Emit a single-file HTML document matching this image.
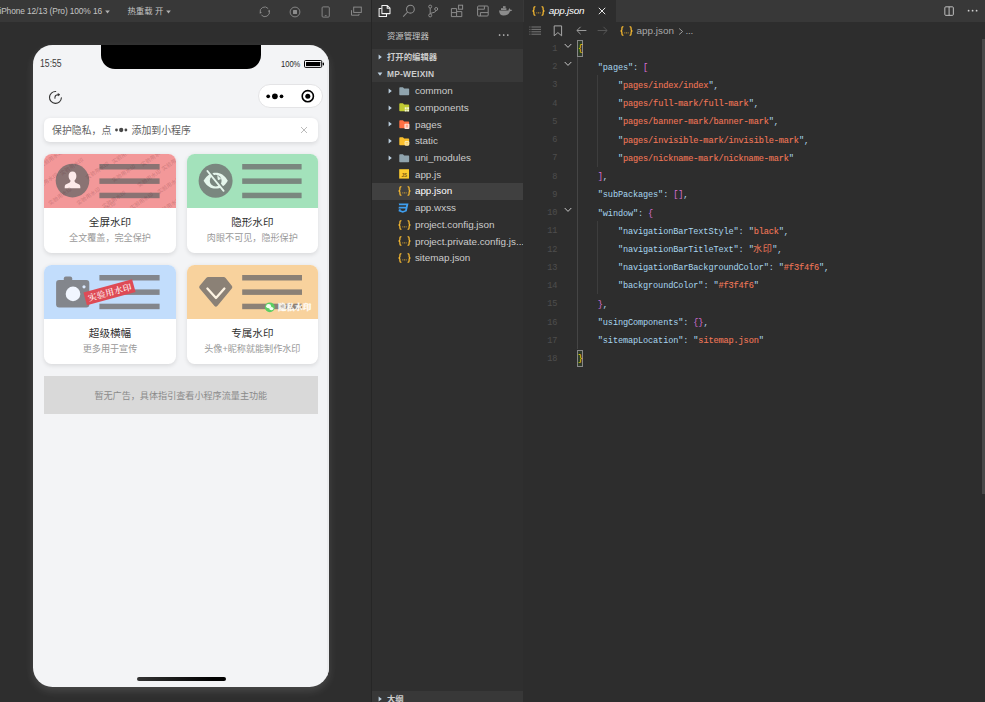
<!DOCTYPE html>
<html lang="zh-CN">
<head>
<meta charset="utf-8">
<title>app.json</title>
<style>
*{box-sizing:border-box;margin:0;padding:0}
html,body{width:985px;height:702px;overflow:hidden;background:#2e2e2e}
body{position:relative;font-family:"Liberation Sans","Noto Sans CJK SC",sans-serif;color:#ccc;-webkit-font-smoothing:antialiased}
.abs{position:absolute}
.t{position:absolute;white-space:nowrap;line-height:1}
/* simulator */
#sim{position:absolute;left:0;top:0;width:371px;height:702px;background:#2e2e2e;overflow:hidden}
#simbar{position:absolute;left:0;top:0;width:371px;height:22.4px;background:#383838}
#simbar .t{font-size:8.4px;color:#c4c4c4;top:7px}
#sep{position:absolute;left:371px;top:0;width:1px;height:702px;background:#262626}
/* phone */
#phone{position:absolute;left:32.5px;top:45px;width:296.6px;height:641.8px;border-radius:19.5px;background:#f3f4f6;overflow:hidden;box-shadow:0 4px 8px rgba(255,255,255,.13)}
#pwrap{position:absolute;left:0;top:0;width:371px;height:702px}
#notch{position:absolute;left:100.7px;top:45px;width:160.3px;height:24.2px;background:#000;border-radius:0 0 14px 14px}
.card{position:absolute;width:131.3px;height:99px;border-radius:7.6px;background:#fff;overflow:hidden;box-shadow:0 1.5px 4px rgba(0,0,0,.10)}
.card .img{position:absolute;left:0;top:0;width:100%;height:54.2px;overflow:hidden}
.card .ttl{position:absolute;left:0;width:100%;text-align:center;top:62.6px;font-size:10.6px;line-height:1;color:#303030;white-space:nowrap}
.card .sub{position:absolute;left:0;width:100%;text-align:center;top:80px;font-size:9.1px;line-height:1;color:#999;white-space:nowrap}
.bar{position:absolute;left:55.4px;width:60.2px;height:5.6px}
/* sidebar */
#side{position:absolute;left:372px;top:0;width:151.5px;height:702px;background:#2f2f2f;overflow:hidden}
.row{position:absolute;left:0;width:151px;height:16.72px}
.row .lbl{position:absolute;left:42.9px;top:2.45px;font-size:9.9px;line-height:1.15;color:#ccc;white-space:nowrap}
.hdr{position:absolute;left:0;width:151px;height:16.7px;background:#383838}
.hdr .lbl{position:absolute;left:15px;top:4px;font-size:8.4px;line-height:1.15;font-weight:bold;color:#ccc;white-space:nowrap}
/* editor */
#ed{position:absolute;left:523px;top:0;width:462px;height:702px;background:#2d2d2d;overflow:hidden}
#tabs{position:absolute;left:0;top:0;width:462px;height:22px;background:#383838}
#tab{position:absolute;left:0.5px;top:0;width:92px;height:22px;background:#2d2d2d}
.ln{position:absolute;left:0;width:462px;height:18.24px;font-family:"Liberation Mono","Noto Sans CJK SC",monospace;font-size:8.6px;line-height:18.24px;white-space:pre;letter-spacing:-0.13px}
.ln .no{position:absolute;left:0;top:1px;width:34.5px;text-align:right;color:#4d4d4d;letter-spacing:0}
.ln .cd{position:absolute;left:54.7px;top:1.4px}
.k{color:#a8d6ef}.s{color:#ee7758;-webkit-text-stroke:0.1px #ee7758}.p{color:#aed3e9}.b1{color:#ffd700}.b2{color:#da70d6}
</style>
</head>
<body>
<div id="sim">
  <div id="simbar">
    <div class="t" style="left:-0.6px;letter-spacing:-0.12px">iPhone 12/13 (Pro) 100% 16</div>
    <svg class="abs" style="left:104.6px;top:9.6px" width="5" height="4" viewBox="0 0 5 4"><path d="M0.2 0.4 L4.8 0.4 L2.5 3.4 Z" fill="#b0b0b0"/></svg>
    <svg class="abs" style="left:165.8px;top:9.6px" width="5" height="4" viewBox="0 0 5 4"><path d="M0.2 0.4 L4.8 0.4 L2.5 3.4 Z" fill="#b0b0b0"/></svg>
    <div class="t" style="left:127.5px">热重载 开</div>

    <svg class="abs" style="left:259px;top:6px" width="12" height="12" viewBox="0 0 12 12"><path d="M1.2 6.6 A4.6 4.6 0 0 1 9.2 2.6 M10.4 5 A4.6 4.6 0 0 1 2.4 9" fill="none" stroke="#8c8c8c" stroke-width="0.9"/><path d="M10.9 3.8 L10.6 6.2 L8.7 4.9 Z M0.7 7.8 L1 5.4 L2.9 6.7 Z" fill="#8c8c8c"/></svg>
    <svg class="abs" style="left:289.3px;top:5.6px" width="12" height="12" viewBox="0 0 12 12"><circle cx="6" cy="6" r="4.9" fill="none" stroke="#8c8c8c" stroke-width="0.9"/><rect x="4" y="4" width="4" height="4" rx="0.5" fill="#8c8c8c"/></svg>
    <svg class="abs" style="left:321px;top:5.6px" width="10" height="12" viewBox="0 0 10 12"><rect x="1.1" y="0.9" width="7.2" height="10.2" rx="1" fill="none" stroke="#8c8c8c" stroke-width="0.9"/><path d="M3.8 9.6 L5.6 9.6" stroke="#8c8c8c" stroke-width="0.8"/></svg>
    <svg class="abs" style="left:349.6px;top:6.4px" width="13" height="11" viewBox="0 0 13 11"><rect x="3.7" y="1.1" width="7.6" height="5.3" fill="none" stroke="#8c8c8c" stroke-width="0.95"/><path d="M1.5 4.2 L1.5 9.2 L9 9.2 L9 7.8" fill="none" stroke="#8c8c8c" stroke-width="0.95"/></svg>
  </div>
  <div id="pwrap">

    <div id="phone"><div class="abs" style="right:0;top:0;width:2px;height:642px;background:#ebecee"></div></div>
    <div id="notch"></div>
    <!-- status bar -->
    <div class="t" style="left:40.4px;top:59.3px;font-size:10.2px;color:#3c3c3c;transform:scaleX(.85);transform-origin:0 0">15:55</div>
    <div class="t" style="left:280.6px;top:59.6px;font-size:9.2px;color:#262626;transform:scaleX(.82);transform-origin:0 0">100%</div>
    <svg class="abs" style="left:304px;top:60px" width="22" height="9" viewBox="0 0 22 9">
      <rect x="0.5" y="0.5" width="17.2" height="6.9" rx="1" fill="none" stroke="#000" stroke-width="1"/>
      <rect x="2" y="2" width="14.2" height="3.9" rx="0.2" fill="#000"/>
      <rect x="18.7" y="2.6" width="1.3" height="2.8" rx="0.6" fill="#000"/>
    </svg>
    <!-- nav bar -->
    <svg class="abs" style="left:44px;top:86px" width="24" height="24" viewBox="0 0 24 24">
      <path d="M11.7 5.5 A5.95 5.95 0 1 0 17.4 11.7" fill="none" stroke="#333" stroke-width="1.1" stroke-linecap="round"/>
      <path d="M10.95 12.3 L10.95 11.2 Q10.95 8.9 14.3 8.7" fill="none" stroke="#333" stroke-width="1.05" stroke-linecap="round"/>
      <path d="M13.9 7.5 L16 8.6 L14.2 9.9 Z" fill="#333" stroke="#333" stroke-width="0.5" stroke-linejoin="round"/>
    </svg>
    <div class="abs" style="left:258.2px;top:84.2px;width:65.3px;height:23.6px;border-radius:12px;background:#fff;border:0.8px solid #e4e4e6"></div>
    <svg class="abs" style="left:257.6px;top:84.2px" width="66" height="24" viewBox="0 0 66 24">
      <circle cx="10.2" cy="12.3" r="1.85" fill="#000"/>
      <circle cx="16.9" cy="12.3" r="2.85" fill="#000"/>
      <circle cx="23.5" cy="12.3" r="1.85" fill="#000"/>
      <circle cx="49.8" cy="12.2" r="5.6" fill="none" stroke="#000" stroke-width="1.6"/>
      <circle cx="49.8" cy="12.2" r="2.5" fill="#000"/>
    </svg>
    <!-- tip -->
    <div class="abs" style="left:43.9px;top:117.5px;width:274.1px;height:24.6px;border-radius:6px;background:#fff;box-shadow:0 1.5px 4px rgba(0,0,0,.10)"></div>
    <div class="t" style="left:52px;top:126.2px;font-size:9.9px;color:#626262">保护隐私，点 <svg width="12.4" height="6" viewBox="0 0 12.4 6" style="vertical-align:1.3px;margin:0 1.1px 0 1.3px"><circle cx="1.5" cy="3" r="1.4" fill="#484848"/><circle cx="6.2" cy="3" r="2.15" fill="#484848"/><circle cx="10.9" cy="3" r="1.4" fill="#484848"/></svg> 添加到小程序</div>
    <svg class="abs" style="left:299.5px;top:126px" width="8" height="8" viewBox="0 0 8 8"><path d="M1 1 L7 7 M7 1 L1 7" stroke="#aaa" stroke-width="0.8" fill="none"/></svg>
    <!-- card 1 -->
    <div class="card" style="left:43.9px;top:154px;width:132.2px">
      <div class="img" style="background:#f39899">
        <svg class="abs" style="left:0;top:0" width="132" height="55" viewBox="0 0 132 55">
          <circle cx="28.5" cy="26.6" r="16.8" fill="#8a7373"/>
          <rect x="55.4" y="10" width="60.2" height="5.5" fill="#8a7373"/>
          <rect x="55.4" y="24.4" width="60.2" height="5.5" fill="#8a7373"/>
          <rect x="55.4" y="38.7" width="60.2" height="5.5" fill="#8a7373"/>
          <path d="M28.5 17.6 c2.6 0 3.9 2.1 3.9 4.4 c0 2 -0.9 3.6 -1.9 4.4 c0 1.6 0.6 2.1 2.2 2.8 c2.2 0.9 3.6 1.5 3.6 3.5 l0 1.6 l-15.6 0 l0 -1.6 c0 -2 1.4 -2.6 3.6 -3.5 c1.6 -0.7 2.2 -1.2 2.2 -2.8 c-1 -0.8 -1.9 -2.4 -1.9 -4.4 c0 -2.3 1.3 -4.4 3.9 -4.4z" fill="#fdeaea"/>
          <g font-size="5.4" fill="#4a0f18" fill-opacity="0.27" font-family="Liberation Sans, Noto Sans CJK SC, sans-serif"><text transform="translate(7.1 4.9) rotate(-34)" text-anchor="middle" y="2">实验用水印</text><text transform="translate(27.8 12.5) rotate(-34)" text-anchor="middle" y="2">实验用水印</text><text transform="translate(53.3 16.6) rotate(-34)" text-anchor="middle" y="2">实验用水印</text><text transform="translate(79.6 19.4) rotate(-34)" text-anchor="middle" y="2">实验用水印</text><text transform="translate(105.1 24.2) rotate(-34)" text-anchor="middle" y="2">实验用水印</text><text transform="translate(125.1 31.1) rotate(-34)" text-anchor="middle" y="2">实验用水印</text><text transform="translate(2.2 27.7) rotate(-34)" text-anchor="middle" y="2">实验用水印</text><text transform="translate(16 42.2) rotate(-34)" text-anchor="middle" y="2">实验用水印</text><text transform="translate(44.4 42.2) rotate(-34)" text-anchor="middle" y="2">实验用水印</text><text transform="translate(69.9 45.6) rotate(-34)" text-anchor="middle" y="2">实验用水印</text><text transform="translate(97.5 47) rotate(-34)" text-anchor="middle" y="2">实验用水印</text><text transform="translate(125.1 51.8) rotate(-34)" text-anchor="middle" y="2">实验用水印</text><text transform="translate(79.6 0.8) rotate(-34)" text-anchor="middle" y="2">实验用水印</text><text transform="translate(108.6 3.5) rotate(-34)" text-anchor="middle" y="2">实验用水印</text><text transform="translate(129.3 7.7) rotate(-34)" text-anchor="middle" y="2">实验用水印</text><text transform="translate(60 56) rotate(-34)" text-anchor="middle" y="2">实验用水印</text></g>
        </svg>
      </div>
      <div class="ttl">全屏水印</div>
      <div class="sub">全文覆盖，完全保护</div>
    </div>
    <!-- card 2 -->
    <div class="card" style="left:186.7px;top:154px">
      <div class="img" style="background:#a3e2bb">
        <svg class="abs" style="left:0;top:0" width="132" height="55" viewBox="0 0 132 55">
          <circle cx="28.6" cy="26.7" r="17" fill="#7a877f"/>
          <rect x="55.2" y="10" width="59.4" height="5.5" fill="#7a877f"/>
          <rect x="55.2" y="24.4" width="59.4" height="5.5" fill="#7a877f"/>
          <rect x="55.2" y="38.7" width="59.4" height="5.5" fill="#7a877f"/>
          <path d="M16.6 26.7 C20 21 24 18.8 28.7 18.8 C33.4 18.8 37.4 21 40.8 26.7 C37.4 32.4 33.4 34.6 28.7 34.6 C24 34.6 20 32.4 16.6 26.7 Z" fill="#e6f6ec"/>
          <circle cx="28.7" cy="26.7" r="5.9" fill="#7a877f"/>
          <path d="M30.2 21 L34.2 25 L30.8 26.2 Z" fill="#e6f6ec"/>
          <path d="M21.6 16.2 L37.8 36" stroke="#7a877f" stroke-width="2" fill="none"/>
          <path d="M20.4 17 L36.6 36.8" stroke="#e6f6ec" stroke-width="1.9" fill="none" stroke-linecap="round"/>
        </svg>
      </div>
      <div class="ttl">隐形水印</div>
      <div class="sub">肉眼不可见，隐形保护</div>
    </div>
    <!-- card 3 -->
    <div class="card" style="left:43.9px;top:265.2px;width:132.2px">
      <div class="img" style="background:#c2ddfc">
        <svg class="abs" style="left:0;top:0" width="132" height="55" viewBox="0 0 132 55">
          <rect x="55.4" y="10" width="60.2" height="5.5" fill="#83868c"/>
          <rect x="55.4" y="24.4" width="60.2" height="5.5" fill="#83868c"/>
          <rect x="55.4" y="38.7" width="60.2" height="5.5" fill="#83868c"/>
          <rect x="12.1" y="15" width="33.2" height="27.4" rx="3" fill="#83868c"/>
          <rect x="19.8" y="11.6" width="8.4" height="6" rx="2" fill="#83868c"/>
          <circle cx="29" cy="28.9" r="7.3" fill="#f1f6ff"/>
          <circle cx="40" cy="21.8" r="1.6" fill="#dcebff"/>
          <g transform="translate(65.6 27.6) rotate(-15.2)">
            <rect x="-25.2" y="-7" width="50.4" height="13.3" fill="#de4b56"/>
            <text x="0.3" y="3" text-anchor="middle" font-size="8.7" letter-spacing="0.3" font-weight="600" fill="#fde9ea" font-family="Liberation Serif, Noto Serif CJK SC, serif">实验用水印</text>
          </g>
        </svg>
      </div>
      <div class="ttl">超级横幅</div>
      <div class="sub">更多用于宣传</div>
    </div>
    <!-- card 4 -->
    <div class="card" style="left:186.7px;top:265.2px">
      <div class="img" style="background:#f8d29d">
        <svg class="abs" style="left:0;top:0" width="132" height="55" viewBox="0 0 132 55">
          <rect x="55.2" y="10" width="59.8" height="5.5" fill="#8b8176"/>
          <rect x="55.2" y="24.4" width="59.8" height="5.5" fill="#8b8176"/>
          <rect x="55.2" y="38.7" width="59.8" height="5.5" fill="#8b8176"/>
          <path d="M21.2 12 L36.6 12 Q37.8 12 38.6 12.9 L45 21 Q45.8 22.2 44.8 23.4 L30.3 41 Q28.9 42.4 27.5 41 L12.7 23.4 Q11.7 22.2 12.5 21 L19.2 12.9 Q20 12 21.2 12 Z" fill="#8b8176"/>
          <path d="M20.4 23.5 L29 33 L37.4 23.5" stroke="#fdf3e2" stroke-width="2.3" fill="none" stroke-linecap="round" stroke-linejoin="round"/>
          <circle cx="82.8" cy="42.3" r="4.9" fill="#5ccf63"/>
          <ellipse cx="81.6" cy="41.2" rx="2.5" ry="2.1" fill="#f2fff2"/>
          <ellipse cx="84.4" cy="43.6" rx="2.1" ry="1.7" fill="#f2fff2"/>
          <text x="91" y="45.4" font-size="8.3" font-weight="900" fill="#fffaf0" stroke="#fff" stroke-opacity="0.55" stroke-width="0.45" font-family="Liberation Serif, Noto Serif CJK SC, serif">隐私水印</text>
        </svg>
      </div>
      <div class="ttl">专属水印</div>
      <div class="sub">头像+昵称就能制作水印</div>
    </div>
    <!-- ad -->
    <div class="abs" style="left:43.7px;top:375.8px;width:274.2px;height:37.8px;background:#d9d9d9"></div>
    <div class="t" style="left:43.7px;width:274.2px;text-align:center;top:391.7px;font-size:9.1px;color:#8a8a8a">暂无广告，具体指引查看小程序流量主功能</div>
    <!-- home indicator -->
    <div class="abs" style="left:137px;top:676.7px;width:88.6px;height:4px;border-radius:2px;background:linear-gradient(90deg,#333 0%,#151515 50%,#000 85%)"></div>
  </div>
</div>
<div id="sep"></div>
<div id="side">
<div class="abs" style="left:0;top:0;width:151px;height:22px;background:#333"></div>
<svg class="abs" style="left:5.5px;top:4px" width="14" height="14" viewBox="0 0 14 14"><path d="M3.9 1.5 L9.4 1.5 L12 4.1 L12 9.6 L3.9 9.6 Z M9.2 1.5 L9.2 4.3 L12 4.3" fill="none" stroke="#f0f0f0" stroke-width="1.05" stroke-linejoin="round"/><path d="M3.7 4.4 L1.1 4.4 L1.1 12.4 L8.5 12.4 L8.5 9.8" fill="none" stroke="#f0f0f0" stroke-width="1.05" stroke-linejoin="round"/></svg>
<svg class="abs" style="left:30px;top:4px" width="14" height="14" viewBox="0 0 14 14"><circle cx="8.4" cy="5.2" r="3.9" fill="none" stroke="#8c8c8c" stroke-width="1.05"/><path d="M5.6 8 L1.2 12.6" stroke="#8c8c8c" stroke-width="1.05" fill="none"/></svg>
<svg class="abs" style="left:54px;top:4px" width="14" height="14" viewBox="0 0 14 14"><circle cx="4.2" cy="2.6" r="1.5" fill="none" stroke="#8c8c8c" stroke-width="1"/><circle cx="4.2" cy="11.4" r="1.5" fill="none" stroke="#8c8c8c" stroke-width="1"/><circle cx="10.2" cy="5" r="1.5" fill="none" stroke="#8c8c8c" stroke-width="1"/><path d="M4.2 4.1 L4.2 9.9 M10.2 6.5 Q10.2 8.4 4.4 9.4" fill="none" stroke="#8c8c8c" stroke-width="1"/></svg>
<svg class="abs" style="left:78px;top:4px" width="14" height="14" viewBox="0 0 14 14"><path d="M1.4 4.6 L6.6 4.6 L6.6 12.6 L1.4 12.6 Z M6.6 7.6 L11.8 7.6 L11.8 12.6 L6.6 12.6 M1.4 8.6 L6.6 8.6" fill="none" stroke="#8c8c8c" stroke-width="1"/><rect x="8.6" y="1.2" width="4" height="4" fill="none" stroke="#8c8c8c" stroke-width="1"/></svg>
<svg class="abs" style="left:103.5px;top:4px" width="14" height="14" viewBox="0 0 14 14"><rect x="1.6" y="2" width="10.6" height="10" rx="1" fill="none" stroke="#8c8c8c" stroke-width="1"/><path d="M1.6 5.2 L8.4 5.2 L8.4 2.2 M4.4 12 L4.4 8.6 L12 8.6" fill="none" stroke="#8c8c8c" stroke-width="1"/></svg>
<svg class="abs" style="left:126px;top:4px" width="15" height="14" viewBox="0 0 15 14"><path d="M1 6.4 L10.4 6.4 Q10.6 4.6 11.8 4.2 Q12.4 5.2 12.2 5.8 Q13.4 5.4 14.2 6 Q13.6 7.2 12 7.2 Q10.6 11.6 5.6 11.6 Q1.6 11.6 1 6.4 Z" fill="#8c8c8c"/><rect x="3" y="4.2" width="5.4" height="1.8" fill="#8c8c8c"/><rect x="5" y="2.2" width="2.6" height="1.7" fill="#8c8c8c"/></svg>
<div class="t" style="left:14.9px;top:31.9px;font-size:8.4px;color:#c8c8c8">资源管理器</div>
<svg class="abs" style="left:126px;top:33.4px" width="12" height="4" viewBox="0 0 12 4"><circle cx="1.6" cy="2" r="0.85" fill="#c8c8c8"/><circle cx="5.7" cy="2" r="0.85" fill="#c8c8c8"/><circle cx="9.8" cy="2" r="0.85" fill="#c8c8c8"/></svg>
<div class="hdr" style="top:48.7px"><div class="lbl">打开的编辑器</div><svg class="abs" style="left:4.6px;top:5.4px" width="6" height="6" viewBox="0 0 6 6"><path d="M1.6 0.6 L4.8 3 L1.6 5.4 Z" fill="#bcd0e0"/></svg></div>
<div class="hdr" style="top:65.4px"><div class="lbl" style="font-family:'Liberation Sans',sans-serif;letter-spacing:0.25px;top:4.2px">MP-WEIXIN</div><svg class="abs" style="left:4.6px;top:5.6px" width="6" height="6" viewBox="0 0 6 6"><path d="M0.6 1.6 L5.4 1.6 L3 4.8 Z" fill="#bcd0e0"/></svg></div>
<div class="row" style="top:82.64px"><svg class="abs" style="left:14.7px;top:5.4px" width="6" height="6" viewBox="0 0 6 6"><path d="M1.6 0.6 L4.8 3 L1.6 5.4 Z" fill="#bcd0e0"/></svg><svg class="abs" style="left:27.1px;top:4.1px" width="11.2" height="9.3" viewBox="0 0 12 10"><path d="M0.3 1.2 Q0.3 0.4 1.1 0.4 L4.2 0.4 L5.5 1.7 L10.1 1.7 Q10.9 1.7 10.9 2.5 L10.9 8.2 Q10.9 9 10.1 9 L1.1 9 Q0.3 9 0.3 8.2 Z" fill="#90a4ae"/></svg><div class="lbl" style="">common</div></div>
<div class="row" style="top:99.36px"><svg class="abs" style="left:14.7px;top:5.4px" width="6" height="6" viewBox="0 0 6 6"><path d="M1.6 0.6 L4.8 3 L1.6 5.4 Z" fill="#bcd0e0"/></svg><svg class="abs" style="left:27.1px;top:4.1px" width="11.2" height="9.3" viewBox="0 0 12 10"><path d="M0.3 1.2 Q0.3 0.4 1.1 0.4 L4.2 0.4 L5.5 1.7 L10.1 1.7 Q10.9 1.7 10.9 2.5 L10.9 8.2 Q10.9 9 10.1 9 L1.1 9 Q0.3 9 0.3 8.2 Z" fill="#c0ca33"/><path d="M6.2 4.6 h2 v2 h-2z M8.8 4.6 h2 v2 h-2z M6.2 7.2 h2 v2 h-2z M8.8 7.2 h2 v2 h-2z" fill="#f4f8d8"/></svg><div class="lbl" style="">components</div></div>
<div class="row" style="top:116.08px"><svg class="abs" style="left:14.7px;top:5.4px" width="6" height="6" viewBox="0 0 6 6"><path d="M1.6 0.6 L4.8 3 L1.6 5.4 Z" fill="#bcd0e0"/></svg><svg class="abs" style="left:27.1px;top:4.1px" width="11.2" height="9.3" viewBox="0 0 12 10"><path d="M0.3 1.2 Q0.3 0.4 1.1 0.4 L4.2 0.4 L5.5 1.7 L10.1 1.7 Q10.9 1.7 10.9 2.5 L10.9 8.2 Q10.9 9 10.1 9 L1.1 9 Q0.3 9 0.3 8.2 Z" fill="#ff7043"/><rect x="5.8" y="4" width="5.4" height="5.6" rx="1" fill="#ffe3d8"/><path d="M7.2 5.6 h2.6 M7.2 7.4 h2.6" stroke="#ff7043" stroke-width="0.8"/></svg><div class="lbl" style="">pages</div></div>
<div class="row" style="top:132.80px"><svg class="abs" style="left:14.7px;top:5.4px" width="6" height="6" viewBox="0 0 6 6"><path d="M1.6 0.6 L4.8 3 L1.6 5.4 Z" fill="#bcd0e0"/></svg><svg class="abs" style="left:27.1px;top:4.1px" width="11.2" height="9.3" viewBox="0 0 12 10"><path d="M0.3 1.2 Q0.3 0.4 1.1 0.4 L4.2 0.4 L5.5 1.7 L10.1 1.7 Q10.9 1.7 10.9 2.5 L10.9 8.2 Q10.9 9 10.1 9 L1.1 9 Q0.3 9 0.3 8.2 Z" fill="#fbc02d"/><rect x="6" y="4.4" width="5" height="5" rx="1.2" fill="#fdeab0"/><path d="M7 6 h3 M7 7.6 h3" stroke="#fbc02d" stroke-width="0.7"/></svg><div class="lbl" style="">static</div></div>
<div class="row" style="top:149.52px"><svg class="abs" style="left:14.7px;top:5.4px" width="6" height="6" viewBox="0 0 6 6"><path d="M1.6 0.6 L4.8 3 L1.6 5.4 Z" fill="#bcd0e0"/></svg><svg class="abs" style="left:27.1px;top:4.1px" width="11.2" height="9.3" viewBox="0 0 12 10"><path d="M0.3 1.2 Q0.3 0.4 1.1 0.4 L4.2 0.4 L5.5 1.7 L10.1 1.7 Q10.9 1.7 10.9 2.5 L10.9 8.2 Q10.9 9 10.1 9 L1.1 9 Q0.3 9 0.3 8.2 Z" fill="#90a4ae"/></svg><div class="lbl" style="">uni_modules</div></div>
<div class="row" style="top:166.24px"><svg class="abs" style="left:27px;top:3.2px" width="11" height="10" viewBox="0 0 11 10"><rect x="0.2" y="0.2" width="9.8" height="9.4" fill="#fbcb2f"/><text x="5.3" y="8" font-size="4.6" font-weight="bold" text-anchor="middle" fill="#7a5a10" font-family="Liberation Sans, sans-serif">JS</text></svg><div class="lbl" style="">app.js</div></div>
<div class="row" style="top:182.96px;background:#404040"><svg class="abs" style="left:26px;top:3.2px" width="13" height="10" viewBox="0 0 13 10"><path d="M3.4 0.7 Q1.9 0.7 1.9 2.1 L1.9 3.6 Q1.9 4.9 0.6 5 Q1.9 5.1 1.9 6.4 L1.9 7.9 Q1.9 9.3 3.4 9.3 M9.6 0.7 Q11.1 0.7 11.1 2.1 L11.1 3.6 Q11.1 4.9 12.4 5 Q11.1 5.1 11.1 6.4 L11.1 7.9 Q11.1 9.3 9.6 9.3" fill="none" stroke="#f2b631" stroke-width="1.3"/><path d="M4.4 6.9 L5.3 6.9 M6.05 6.9 L6.95 6.9 M7.7 6.9 L8.6 6.9" stroke="#f2b631" stroke-width="0.9"/></svg><div class="lbl" style="color:#fff">app.json</div></div>
<div class="row" style="top:199.68px"><svg class="abs" style="left:25px;top:3.2px" width="13" height="10.6" viewBox="0 0 12 11" preserveAspectRatio="none"><path d="M1.6 0.6 L10.6 0.6 L9 8.6 L5.3 10 L1.4 8.6 L1.8 6.4 L3.5 6.4 L3.3 7.4 L5.4 8.2 L7.5 7.4 L7.9 5.6 L1.4 5.6 L1.7 3.9 L8.2 3.9 L8.5 2.3 L2 2.3 Z" fill="#3f9ff0"/></svg><div class="lbl" style="">app.wxss</div></div>
<div class="row" style="top:216.40px"><svg class="abs" style="left:26px;top:3.2px" width="13" height="10" viewBox="0 0 13 10"><path d="M3.4 0.7 Q1.9 0.7 1.9 2.1 L1.9 3.6 Q1.9 4.9 0.6 5 Q1.9 5.1 1.9 6.4 L1.9 7.9 Q1.9 9.3 3.4 9.3 M9.6 0.7 Q11.1 0.7 11.1 2.1 L11.1 3.6 Q11.1 4.9 12.4 5 Q11.1 5.1 11.1 6.4 L11.1 7.9 Q11.1 9.3 9.6 9.3" fill="none" stroke="#f2b631" stroke-width="1.3"/><path d="M4.4 6.9 L5.3 6.9 M6.05 6.9 L6.95 6.9 M7.7 6.9 L8.6 6.9" stroke="#f2b631" stroke-width="0.9"/></svg><div class="lbl" style="">project.config.json</div></div>
<div class="row" style="top:233.12px"><svg class="abs" style="left:26px;top:3.2px" width="13" height="10" viewBox="0 0 13 10"><path d="M3.4 0.7 Q1.9 0.7 1.9 2.1 L1.9 3.6 Q1.9 4.9 0.6 5 Q1.9 5.1 1.9 6.4 L1.9 7.9 Q1.9 9.3 3.4 9.3 M9.6 0.7 Q11.1 0.7 11.1 2.1 L11.1 3.6 Q11.1 4.9 12.4 5 Q11.1 5.1 11.1 6.4 L11.1 7.9 Q11.1 9.3 9.6 9.3" fill="none" stroke="#f2b631" stroke-width="1.3"/><path d="M4.4 6.9 L5.3 6.9 M6.05 6.9 L6.95 6.9 M7.7 6.9 L8.6 6.9" stroke="#f2b631" stroke-width="0.9"/></svg><div class="lbl" style="">project.private.config.js...</div></div>
<div class="row" style="top:249.84px"><svg class="abs" style="left:26px;top:3.2px" width="13" height="10" viewBox="0 0 13 10"><path d="M3.4 0.7 Q1.9 0.7 1.9 2.1 L1.9 3.6 Q1.9 4.9 0.6 5 Q1.9 5.1 1.9 6.4 L1.9 7.9 Q1.9 9.3 3.4 9.3 M9.6 0.7 Q11.1 0.7 11.1 2.1 L11.1 3.6 Q11.1 4.9 12.4 5 Q11.1 5.1 11.1 6.4 L11.1 7.9 Q11.1 9.3 9.6 9.3" fill="none" stroke="#f2b631" stroke-width="1.3"/><path d="M4.4 6.9 L5.3 6.9 M6.05 6.9 L6.95 6.9 M7.7 6.9 L8.6 6.9" stroke="#f2b631" stroke-width="0.9"/></svg><div class="lbl" style="">sitemap.json</div></div>
<div class="hdr" style="top:691px"><div class="lbl">大纲</div><svg class="abs" style="left:4.6px;top:5.4px" width="6" height="6" viewBox="0 0 6 6"><path d="M1.6 0.6 L4.8 3 L1.6 5.4 Z" fill="#bcd0e0"/></svg></div>
</div>
<div id="ed">
<div id="tabs"><div id="tab"><svg class="abs" style="left:8.6px;top:6px" width="13" height="10" viewBox="0 0 13 10"><path d="M3.4 0.7 Q1.9 0.7 1.9 2.1 L1.9 3.6 Q1.9 4.9 0.6 5 Q1.9 5.1 1.9 6.4 L1.9 7.9 Q1.9 9.3 3.4 9.3 M9.6 0.7 Q11.1 0.7 11.1 2.1 L11.1 3.6 Q11.1 4.9 12.4 5 Q11.1 5.1 11.1 6.4 L11.1 7.9 Q11.1 9.3 9.6 9.3" fill="none" stroke="#f2b631" stroke-width="1.3"/><path d="M4.4 6.9 L5.3 6.9 M6.05 6.9 L6.95 6.9 M7.7 6.9 L8.6 6.9" stroke="#f2b631" stroke-width="0.9"/></svg><div class="t" style="left:25.3px;top:6.4px;font-size:9.9px;font-style:italic;color:#fff;letter-spacing:-0.25px">app.json</div><svg class="abs" style="left:74.6px;top:7.4px" width="8" height="8" viewBox="0 0 8 8"><path d="M0.8 0.8 L7.2 7.2 M7.2 0.8 L0.8 7.2" stroke="#e8e8e8" stroke-width="1" fill="none"/></svg></div><svg class="abs" style="left:420.6px;top:5.6px" width="10.2" height="10.2" viewBox="0 0 11 11"><rect x="0.9" y="0.9" width="9.2" height="9.2" rx="1" fill="none" stroke="#d0d0d0" stroke-width="0.95"/><path d="M5.5 0.9 L5.5 10.1" stroke="#d0d0d0" stroke-width="0.95"/></svg><svg class="abs" style="left:444.4px;top:9.2px" width="12" height="4" viewBox="0 0 12 4"><circle cx="1.6" cy="1.7" r="0.9" fill="#d0d0d0"/><circle cx="5.6" cy="1.7" r="0.9" fill="#d0d0d0"/><circle cx="9.6" cy="1.7" r="0.9" fill="#d0d0d0"/></svg></div>
<svg class="abs" style="left:6.4px;top:26.4px" width="13" height="9" viewBox="0 0 13 9"><path d="M0.4 1 h1 M2.4 1 h9.6 M0.4 3.4 h1 M2.4 3.4 h9.6 M0.4 5.8 h1 M2.4 5.8 h9.6 M0.4 8.2 h1 M2.4 8.2 h9.6" stroke="#8a8a8a" stroke-width="0.8"/></svg>
<svg class="abs" style="left:30.4px;top:25px" width="10" height="12" viewBox="0 0 10 12"><path d="M1.2 0.9 L8.6 0.9 L8.6 10.8 L4.9 7.6 L1.2 10.8 Z" fill="none" stroke="#a8a8a8" stroke-width="1"/></svg>
<svg class="abs" style="left:52.6px;top:26.4px" width="11" height="9" viewBox="0 0 11 9"><path d="M10.4 4.5 L1 4.5 M4.6 0.8 L0.9 4.5 L4.6 8.2" fill="none" stroke="#9a9a9a" stroke-width="1"/></svg>
<svg class="abs" style="left:74px;top:26.4px" width="11" height="9" viewBox="0 0 11 9"><path d="M0.6 4.5 L10 4.5 M6.4 0.8 L10.1 4.5 L6.4 8.2" fill="none" stroke="#565656" stroke-width="1"/></svg>
<svg class="abs" style="left:96.5px;top:25.8px" width="13" height="10" viewBox="0 0 13 10"><path d="M3.4 0.7 Q1.9 0.7 1.9 2.1 L1.9 3.6 Q1.9 4.9 0.6 5 Q1.9 5.1 1.9 6.4 L1.9 7.9 Q1.9 9.3 3.4 9.3 M9.6 0.7 Q11.1 0.7 11.1 2.1 L11.1 3.6 Q11.1 4.9 12.4 5 Q11.1 5.1 11.1 6.4 L11.1 7.9 Q11.1 9.3 9.6 9.3" fill="none" stroke="#f2b631" stroke-width="1.3"/><path d="M4.4 6.9 L5.3 6.9 M6.05 6.9 L6.95 6.9 M7.7 6.9 L8.6 6.9" stroke="#f2b631" stroke-width="0.9"/></svg>
<div class="t" style="left:113.6px;top:26px;font-size:9.9px;color:#a9a9a9">app.json</div>
<svg class="abs" style="left:154.6px;top:27.6px" width="6" height="7" viewBox="0 0 6 7"><path d="M1.2 0.5 L4.6 3.5 L1.2 6.5" fill="none" stroke="#a9a9a9" stroke-width="0.9"/></svg>
<div class="t" style="left:162.6px;top:26px;font-size:9.9px;color:#a9a9a9;letter-spacing:-0.3px">...</div>
<div class="abs" style="left:54.2px;top:57.22px;width:1px;height:291.84px;background:#454545"></div>
<div class="abs" style="left:74.2px;top:75.46px;width:1px;height:91.20px;background:#3d3d3d"></div>
<div class="abs" style="left:74.2px;top:221.38px;width:1px;height:72.96px;background:#3d3d3d"></div>
<div class="abs" style="left:54.4px;top:39.58px;width:5.4px;height:17px;background:#2f3a2a;border:0.8px solid #888"></div>
<div class="abs" style="left:54.4px;top:349.66px;width:5.4px;height:17px;background:#2f3a2a;border:0.8px solid #888"></div>
<div class="ln" style="top:38.98px"><span class="no">1</span><svg class="abs" style="left:41px;top:4.2px" width="8" height="6" viewBox="0 0 8 6"><path d="M0.7 1 L4 4.4 L7.3 1" fill="none" stroke="#c8c8c8" stroke-width="1"/></svg><span class="cd"><span class="b1">{</span></span></div>
<div class="ln" style="top:57.22px"><span class="no">2</span><svg class="abs" style="left:41px;top:4.2px" width="8" height="6" viewBox="0 0 8 6"><path d="M0.7 1 L4 4.4 L7.3 1" fill="none" stroke="#c8c8c8" stroke-width="1"/></svg><span class="cd">    <span class="k">"pages"</span><span class="p">: </span><span class="b2">[</span></span></div>
<div class="ln" style="top:75.46px"><span class="no">3</span><span class="cd">        <span class="k">"</span><span class="s">pages/index/index</span><span class="k">"</span><span class="p">,</span></span></div>
<div class="ln" style="top:93.70px"><span class="no">4</span><span class="cd">        <span class="k">"</span><span class="s">pages/full-mark/full-mark</span><span class="k">"</span><span class="p">,</span></span></div>
<div class="ln" style="top:111.94px"><span class="no">5</span><span class="cd">        <span class="k">"</span><span class="s">pages/banner-mark/banner-mark</span><span class="k">"</span><span class="p">,</span></span></div>
<div class="ln" style="top:130.18px"><span class="no">6</span><span class="cd">        <span class="k">"</span><span class="s">pages/invisible-mark/invisible-mark</span><span class="k">"</span><span class="p">,</span></span></div>
<div class="ln" style="top:148.42px"><span class="no">7</span><span class="cd">        <span class="k">"</span><span class="s">pages/nickname-mark/nickname-mark</span><span class="k">"</span></span></div>
<div class="ln" style="top:166.66px"><span class="no">8</span><span class="cd">    <span class="b2">]</span><span class="p">,</span></span></div>
<div class="ln" style="top:184.90px"><span class="no">9</span><span class="cd">    <span class="k">"subPackages"</span><span class="p">: </span><span class="b2">[]</span><span class="p">,</span></span></div>
<div class="ln" style="top:203.14px"><span class="no">10</span><svg class="abs" style="left:41px;top:4.2px" width="8" height="6" viewBox="0 0 8 6"><path d="M0.7 1 L4 4.4 L7.3 1" fill="none" stroke="#c8c8c8" stroke-width="1"/></svg><span class="cd">    <span class="k">"window"</span><span class="p">: </span><span class="b2">{</span></span></div>
<div class="ln" style="top:221.38px"><span class="no">11</span><span class="cd">        <span class="k">"navigationBarTextStyle"</span><span class="p">: </span><span class="k">"</span><span class="s">black</span><span class="k">"</span><span class="p">,</span></span></div>
<div class="ln" style="top:239.62px"><span class="no">12</span><span class="cd">        <span class="k">"navigationBarTitleText"</span><span class="p">: </span><span class="k">"</span><span class="s" style="font-size:9.1px;letter-spacing:0.5px;-webkit-text-stroke:0;margin-left:-0.6px">水印</span><span class="k">"</span><span class="p">,</span></span></div>
<div class="ln" style="top:257.86px"><span class="no">13</span><span class="cd">        <span class="k">"navigationBarBackgroundColor"</span><span class="p">: </span><span class="k">"</span><span class="s">#f3f4f6</span><span class="k">"</span><span class="p">,</span></span></div>
<div class="ln" style="top:276.10px"><span class="no">14</span><span class="cd">        <span class="k">"backgroundColor"</span><span class="p">: </span><span class="k">"</span><span class="s">#f3f4f6</span><span class="k">"</span></span></div>
<div class="ln" style="top:294.34px"><span class="no">15</span><span class="cd">    <span class="b2">}</span><span class="p">,</span></span></div>
<div class="ln" style="top:312.58px"><span class="no">16</span><span class="cd">    <span class="k">"usingComponents"</span><span class="p">: </span><span class="b2">{}</span><span class="p">,</span></span></div>
<div class="ln" style="top:330.82px"><span class="no">17</span><span class="cd">    <span class="k">"sitemapLocation"</span><span class="p">: </span><span class="k">"</span><span class="s">sitemap.json</span><span class="k">"</span></span></div>
<div class="ln" style="top:349.06px"><span class="no">18</span><span class="cd"><span class="b1">}</span></span></div>
<div class="abs" style="left:459px;top:39px;width:3px;height:455px;background:#484848"></div>
</div>
</body>
</html>
